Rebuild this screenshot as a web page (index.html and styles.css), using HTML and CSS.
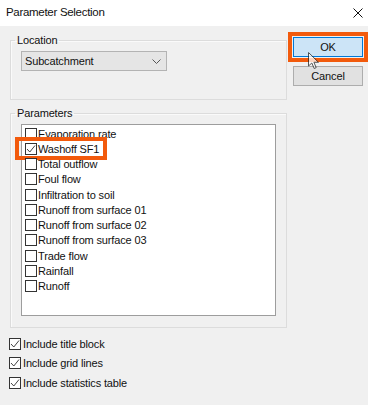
FILE: index.html
```html
<!DOCTYPE html>
<html>
<head>
    <title>Parameter Selection</title>
    <link rel="stylesheet" href="styles.css">
</head>
<body>
    <div class="dialog">
        <div class="titlebar">
            <span class="title">Parameter Selection</span>
            <svg class="close" width="10" height="10" viewBox="0 0 10 10">
                <path d="M0.5 0.5 L9.5 9.5 M9.5 0.5 L0.5 9.5" stroke="#111" stroke-width="1" fill="none"/>
            </svg>
        </div>

        <div class="content">
            <div class="main">
                <div class="left">
                    <fieldset class="group location">
                        <legend>Location</legend>
                        <div class="combo">
                            <span>Subcatchment</span>
                            <svg width="9" height="5" viewBox="0 0 9 5">
                                <path d="M0.5 0.5 L4.5 4.5 L8.5 0.5" stroke="#555" stroke-width="1" fill="none"/>
                            </svg>
                        </div>
                    </fieldset>

                    <fieldset class="group params">
                        <legend>Parameters</legend>
                        <div class="listbox">
                            <div class="row"><span class="item"><span class="box"></span>Evaporation rate</span></div>
                            <div class="row"><span class="item hl"><span class="box checked"></span>Washoff SF1</span></div>
                            <div class="row"><span class="item"><span class="box"></span>Total outflow</span></div>
                            <div class="row"><span class="item"><span class="box"></span>Foul flow</span></div>
                            <div class="row"><span class="item"><span class="box"></span>Infiltration to soil</span></div>
                            <div class="row"><span class="item"><span class="box"></span>Runoff from surface 01</span></div>
                            <div class="row"><span class="item"><span class="box"></span>Runoff from surface 02</span></div>
                            <div class="row"><span class="item"><span class="box"></span>Runoff from surface 03</span></div>
                            <div class="row"><span class="item"><span class="box"></span>Trade flow</span></div>
                            <div class="row"><span class="item"><span class="box"></span>Rainfall</span></div>
                            <div class="row"><span class="item"><span class="box"></span>Runoff</span></div>
                        </div>
                    </fieldset>
                </div>

                <div class="buttons">
                    <button class="btn default">OK</button>
                    <button class="btn">Cancel</button>
                    <svg class="cursor" width="12" height="18" viewBox="0 0 12 18">
                        <path d="M0.5 0.5 L0.5 14 L3.8 11 L6.2 16.5 L8.2 15.6 L5.9 10.3 L10.5 10.3 Z" fill="#fff" stroke="#222" stroke-width="1"/>
                    </svg>
                </div>
            </div>

            <div class="options">
                <div class="opt"><span class="box checked"></span>Include title block</div>
                <div class="opt"><span class="box checked"></span>Include grid lines</div>
                <div class="opt"><span class="box checked"></span>Include statistics table</div>
            </div>
        </div>
    </div>
</body>
</html>
```

FILE: styles.css
```css
body {
    margin: 0;
    padding: 0;
    font-family: "Liberation Sans", Arial, sans-serif;
    font-size: 11px;
    letter-spacing: -0.15px;
    color: #111;
    background: #f0f0f0;
}
.dialog { width: 368px; height: 405px; background: #f0f0f0; }
.titlebar {
    height: 26px;
    background: #fff;
    display: flex;
    align-items: center;
    justify-content: space-between;
    padding: 0 5px 2px 6px;
    box-sizing: border-box;
}
.title { font-size: 11.5px; letter-spacing: -0.3px; }
.close { margin-top: 2px; }

.content { padding: 8px 0 0 10px; }
.main { display: flex; align-items: flex-start; }
.left { width: 277px; }

.group {
    margin: 0;
    padding: 0 10px;
    border: 1px solid #dcdcdc;
    box-shadow: inset 1px 1px 0 #fafafa;
    min-width: 0;
}
.group legend {
    margin-left: -6px;
    padding: 0 2px;
    line-height: 13px;
    height: 13px;
}
.location { height: 66px; box-sizing: border-box; padding-top: 4px; }
.params { margin-top: 7px; padding-top: 4px; padding-bottom: 11px; }

.combo {
    width: 146px;
    height: 20px;
    box-sizing: border-box;
    background: #e5e5e5;
    border: 1px solid #b3b3b3;
    display: flex;
    align-items: center;
    justify-content: space-between;
    padding: 0 5px 0 3px;
}

.listbox {
    height: 192px;
    box-sizing: border-box;
    background: #fff;
    border: 1px solid #9d9d9d;
    padding: 1px 0 0 3px;
}
.row { height: 15.25px; display: flex; align-items: center; }
.item { display: inline-flex; align-items: center; height: 15px; }
.item.hl {
    outline: 4px solid #f25a0c;
    margin-left: -6px;
    padding-left: 6px;
    padding-right: 4px;
}

.box {
    width: 12px;
    height: 12px;
    box-sizing: border-box;
    border: 1px solid #333;
    background: #fff;
    margin-right: 1px;
    flex-shrink: 0;
}
.box.checked {
    background: #fff url("data:image/svg+xml,%3Csvg xmlns='http://www.w3.org/2000/svg' width='10' height='10' viewBox='0 0 10 10'%3E%3Cpath d='M1 5 L3.8 8 L9 1.5' stroke='%23444' stroke-width='1' fill='none'/%3E%3C/svg%3E") no-repeat center;
}

.buttons {
    position: relative;
    margin-left: 6px;
    margin-top: 3px;
    display: flex;
    flex-direction: column;
    gap: 9px;
}
.btn {
    width: 70px;
    height: 20px;
    font-family: inherit;
    font-size: 11px;
    letter-spacing: -0.15px;
    color: #111;
    background: #e1e1e1;
    border: 1px solid #adadad;
    padding: 0;
}
.btn.default {
    background: #cce4f7;
    border-color: #0078d7;
    outline: 4px solid #f25a0c;
    outline-offset: 1px;
}
.cursor { position: absolute; left: 15px; top: 15px; opacity: 0.75; }

.options { margin-top: 6px; margin-left: -1px; }
.opt { height: 19.5px; display: flex; align-items: center; }
.opt .box { margin-right: 2px; }
```
